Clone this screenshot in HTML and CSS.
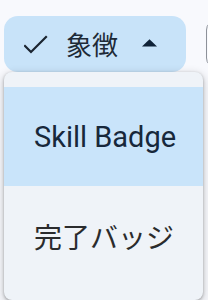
FILE: index.html
```html
<!DOCTYPE html>
<html lang="ja">
<head>
<meta charset="utf-8">
<link rel="stylesheet" href="styles.css">
</head>
<body>
<div class="page">
  <div class="chips">
    <div class="chip chip-selected">
      <svg class="check" width="24" height="20" viewBox="0 0 24 20"><polyline points="1,12 7,18 22,3" fill="none" stroke="#1b2531" stroke-width="2.2" stroke-linecap="square"/></svg>
      <span class="chip-label">象徴</span>
      <svg class="arrow" width="15" height="8" viewBox="0 0 15 8"><polygon points="7.5,0.2 15,7.6 0,7.6" fill="#0f2238"/></svg>
    </div>
    <div class="chip chip-outline"></div>
  </div>
  <div class="menu">
    <div class="menu-item selected">Skill Badge</div>
    <div class="menu-item">完了バッジ</div>
  </div>
</div>
</body>
</html>
```
FILE: styles.css
```css
html, body {
  margin: 0;
  padding: 0;
  background: #f8f9fd;
  overflow: hidden;
}
.page {
  position: relative;
  width: 208px;
  height: 300px;
  overflow: hidden;
  font-family: Roboto, "Noto Sans CJK JP", sans-serif;
}
.chips {
  display: flex;
  padding: 16px 0 0 4px;
  gap: 20px;
  width: 208px;
  box-sizing: border-box;
  overflow: hidden;
}
.chip {
  box-sizing: border-box;
  height: 56px;
  border-radius: 14px;
  flex: none;
}
.chip-selected {
  width: 182px;
  background: #c8e3f9;
  display: flex;
  align-items: center;
  padding-left: 20px;
}
.check {
  display: block;
  flex: none;
}
.chip-label {
  margin-left: 18px;
  font-family: "Noto Sans CJK JP", sans-serif;
  font-size: 26px;
  color: #1d2a37;
  line-height: 1;
}
.arrow {
  display: block;
  margin-left: 24px;
  margin-top: -3px;
}
.chip-outline {
  width: 60px;
  border: 1.5px solid #8d9199;
  border-radius: 10px;
  margin-top: 4px;
  height: 48px;
}
.menu {
  position: absolute;
  top: 72px;
  left: 4px;
  width: 199px;
  background: #eff3f8;
  border-radius: 8px;
  padding: 15px 0;
  box-shadow: 0 1px 3px rgba(0,0,0,0.3), 0 3px 8px 2px rgba(0,0,0,0.14);
}
.menu-item {
  height: 99px;
  display: flex;
  align-items: center;
  padding-left: 30px;
  font-size: 29px;
  color: #2a2b2d;
}
.menu-item.selected {
  background: #c9e4fa;
  color: #17283b;
}
.menu-item:last-child {
  font-family: "Noto Sans CJK JP", sans-serif;
  font-size: 28px;
}
```
